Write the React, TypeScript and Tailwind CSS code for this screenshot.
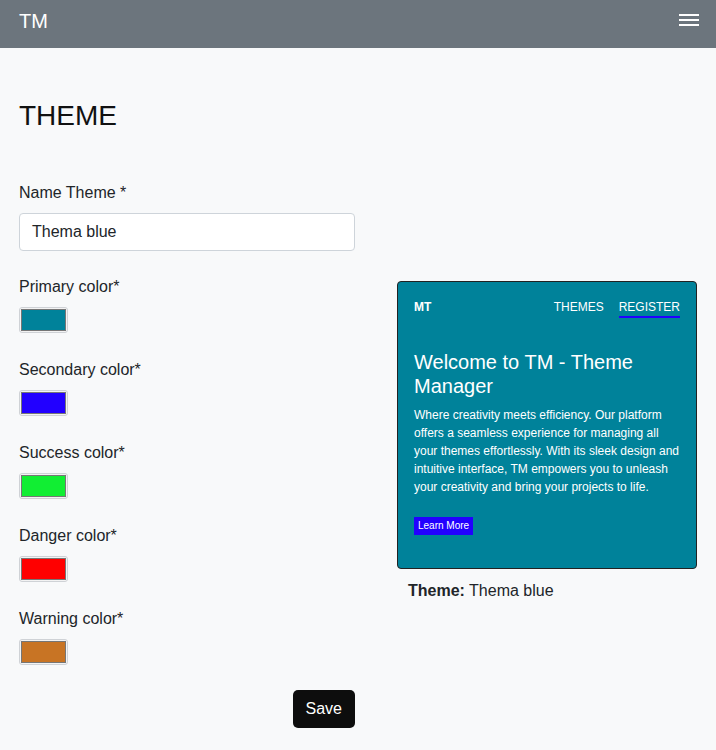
import React from "react";

const colors = [
  { label: "Primary color*", color: "#00829a" },
  { label: "Secondary color*", color: "#2200ff" },
  { label: "Success color*", color: "#11ee33" },
  { label: "Danger color*", color: "#ff0000" },
  { label: "Warning color*", color: "#c87424" },
];

function Swatch({ color }: { color: string }) {
  return (
    <div className="w-[49px] h-[26px] rounded-[3px] border border-[#cfd2d6] bg-[#f3f3f3] p-px">
      <div className="w-full h-full border border-[#767676]" style={{ backgroundColor: color }} />
    </div>
  );
}

export default function App() {
  return (
    <div
      className="min-h-screen bg-[#f8f9fa] text-[#212529]"
      style={{ fontFamily: '"Liberation Sans", Arial, sans-serif' }}
    >
      <header className="h-[48px] bg-[#6c757d] flex items-start justify-between pl-[19px] pr-[17px] pt-[9px]">
        <span className="text-white text-[20px] leading-[24px]">TM</span>
        <div className="mt-[5px] flex flex-col gap-[3px] w-[20px]">
          <span className="block h-[2px] bg-white" />
          <span className="block h-[2px] bg-white" />
          <span className="block h-[2px] bg-white" />
        </div>
      </header>

      <main className="px-[19px]">
        <h1 className="mt-[51px] text-[28px] leading-[34px] text-[#111]">THEME</h1>

        <div className="mt-[48px] w-[336px]">
          <label className="block text-[16px] leading-[24px]">Name Theme *</label>
          <div className="mt-[8px] h-[38px] rounded-[4px] border border-[#ced4da] bg-white px-[12px] flex items-center text-[16px] leading-[24px]">
            Thema blue
          </div>
        </div>

        <div className="mt-[24px] flex">
          <div className="w-[336px] flex flex-col">
            {colors.map((c) => (
              <div key={c.label} className="mb-[25px]">
                <label className="block text-[16px] leading-[24px]">{c.label}</label>
                <div className="mt-[8px]">
                  <Swatch color={c.color} />
                </div>
              </div>
            ))}
            <div className="flex justify-end">
              <button className="h-[38px] px-[13px] rounded-[5px] bg-[#0d0d0d] text-white text-[16px] leading-[24px]">
                Save
              </button>
            </div>
          </div>

          <div className="ml-[42px] w-[300px] mt-[6px]">
            <div className="rounded-[4px] border border-[#222] bg-[#00829a] text-white px-[16px] pt-[16px] pb-[33px]">
              <nav className="flex items-start justify-between text-[12px] leading-[18px]">
                <span className="font-bold">MT</span>
                <div className="flex gap-[15px]">
                  <span>THEMES</span>
                  <span className="border-b-[2px] border-[#2200ff]">REGISTER</span>
                </div>
              </nav>
              <h2 className="mt-[32px] text-[20px] leading-[24px]">Welcome to TM - Theme Manager</h2>
              <p className="mt-[8px] text-[12px] leading-[18px]">
                Where creativity meets efficiency. Our platform offers a seamless experience for managing all your themes effortlessly. With its sleek design and intuitive interface, TM empowers you to unleash your creativity and bring your projects to life.
              </p>
              <button className="mt-[21px] h-[18px] px-[4px] bg-[#2200ff] text-white text-[10px] leading-[18px] flex items-center">
                Learn More
              </button>
            </div>
            <p className="mt-[10px] ml-[11px] text-[16px] leading-[24px]">
              <span className="font-bold">Theme:</span> Thema blue
            </p>
          </div>
        </div>
      </main>
    </div>
  );
}
